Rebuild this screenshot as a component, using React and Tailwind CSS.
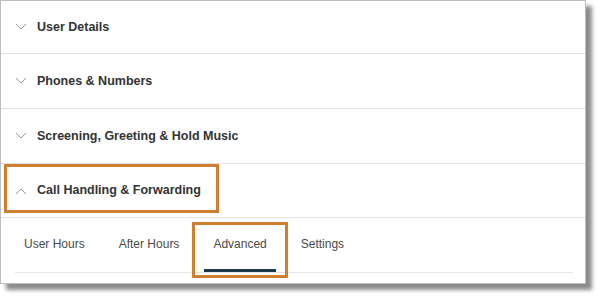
import React from "react";

const sections = [
  { title: "User Details", h: "h-[53px]" },
  { title: "Phones & Numbers", h: "h-[55px]" },
  { title: "Screening, Greeting & Hold Music", h: "h-[55px]" },
];

const tabs = ["User Hours", "After Hours", "Advanced", "Settings"];

function Chevron({ up }) {
  return (
    <svg width="12" height="8" viewBox="0 0 12 8" className="shrink-0" fill="none">
      <path
        d={up ? "M1 7 L6 2 L11 7" : "M1 1 L6 6 L11 1"}
        stroke="#999"
        strokeWidth="1"
      />
    </svg>
  );
}

export default function App() {
  return (
    <div className="h-[296px] w-[598px] bg-white font-['Liberation_Sans',Arial,sans-serif]">
      <div className="relative flex h-[284px] w-[586px] flex-col border border-[#bdbdbd] bg-white shadow-[6px_6px_4px_rgba(0,0,0,0.45)]">
        {sections.map((s) => (
          <div
            key={s.title}
            className={`flex ${s.h} shrink-0 items-center gap-[10px] border-b border-[#e3e3e3] pl-[14px]`}
          >
            <Chevron />
            <span className="text-[12.5px] font-bold text-[#333]">{s.title}</span>
          </div>
        ))}

        {/* Expanded section */}
        <div className="relative flex h-[54px] shrink-0 items-center gap-[10px] border-b border-[#e3e3e3] pl-[14px]">
          <Chevron up />
          <span className="text-[12.5px] font-bold text-[#333]">Call Handling &amp; Forwarding</span>
          <div className="absolute left-[3px] top-0 h-[49px] w-[215px] border-[3px] border-[#d07f2e]" />
        </div>

        <div className="ml-[14px] mr-[12px] flex border-b border-[#e6e6e6]">
          {tabs.map((t) => (
            <div
              key={t}
              className={`relative mr-[16px] flex h-[54px] items-center border-b-[3px] px-[9px] pt-[1px] text-[12px] text-[#4a4a4a] ${
                t === "Advanced" ? "border-[#1e3a4a]" : "border-transparent"
              }`}
            >
              {t}
              {t === "Advanced" && (
                <div className="absolute -left-[12px] top-[4px] h-[56px] w-[96px] border-[3px] border-[#d07f2e]" />
              )}
            </div>
          ))}
        </div>
      </div>
    </div>
  );
}
